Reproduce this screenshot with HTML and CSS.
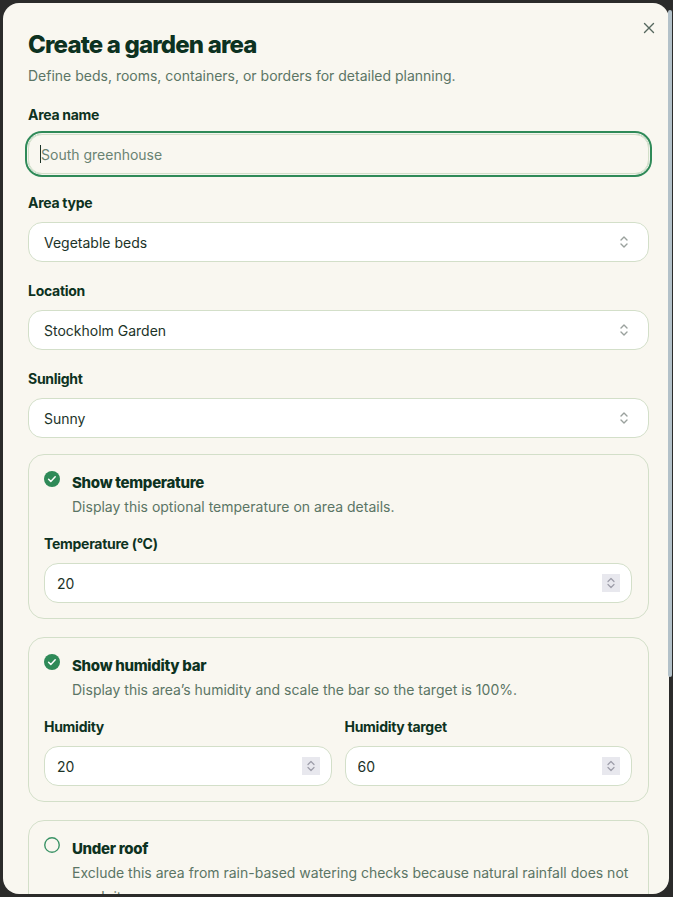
FILE: index.html
```html
<!DOCTYPE html>
<html lang="en">
<head>
    <meta charset="UTF-8">
    <meta name="viewport" content="width=device-width, initial-scale=1.0">
    <title>Create a garden area</title>
    <link rel="stylesheet" href="styles.css">
</head>
<body>
    <div class="backdrop">
        <div class="modal">
            <button class="close" aria-label="Close">
                <svg width="12" height="12" viewBox="0 0 12 12"><path d="M1.5 1.5l9 9M10.5 1.5l-9 9" stroke="#56685f" stroke-width="1.4" stroke-linecap="round"/></svg>
            </button>

            <div class="modal-body">
                <h1 class="title">Create a garden area</h1>
                <p class="subtitle">Define beds, rooms, containers, or borders for detailed planning.</p>

                <div class="form">
                    <div class="field">
                        <label class="label">Area name</label>
                        <div class="text-input is-focused">
                            <span class="caret"></span>
                            <input type="text" placeholder="South greenhouse">
                        </div>
                    </div>

                    <div class="field">
                        <label class="label">Area type</label>
                        <button class="select">
                            <span>Vegetable beds</span>
                            <svg class="chevrons" width="10" height="14" viewBox="0 0 10 14"><path d="M2 5l3-3 3 3M2 9l3 3 3-3" fill="none" stroke="#9aa19d" stroke-width="1.4" stroke-linecap="round" stroke-linejoin="round"/></svg>
                        </button>
                    </div>

                    <div class="field">
                        <label class="label">Location</label>
                        <button class="select">
                            <span>Stockholm Garden</span>
                            <svg class="chevrons" width="10" height="14" viewBox="0 0 10 14"><path d="M2 5l3-3 3 3M2 9l3 3 3-3" fill="none" stroke="#9aa19d" stroke-width="1.4" stroke-linecap="round" stroke-linejoin="round"/></svg>
                        </button>
                    </div>

                    <div class="field">
                        <label class="label">Sunlight</label>
                        <button class="select">
                            <span>Sunny</span>
                            <svg class="chevrons" width="10" height="14" viewBox="0 0 10 14"><path d="M2 5l3-3 3 3M2 9l3 3 3-3" fill="none" stroke="#9aa19d" stroke-width="1.4" stroke-linecap="round" stroke-linejoin="round"/></svg>
                        </button>
                    </div>

                    <!-- optional blocks -->
                    <div class="option-card first">
                        <div class="option-head">
                            <svg class="check" width="16" height="16" viewBox="0 0 16 16"><circle cx="8" cy="8" r="8" fill="#2f8a58"/><path d="M4.6 8.2l2.2 2.2 4.4-4.6" fill="none" stroke="#fff" stroke-width="1.5" stroke-linecap="round" stroke-linejoin="round"/></svg>
                            <div>
                                <div class="option-title">Show temperature</div>
                                <div class="option-desc">Display this optional temperature on area details.</div>
                            </div>
                        </div>
                        <div class="field">
                            <label class="label">Temperature (°C)</label>
                            <div class="number-input">
                                <input type="text" value="20">
                                <span class="spinner"><svg width="10" height="14" viewBox="0 0 10 14"><path d="M2 5.5l3-3 3 3M2 8.5l3 3 3-3" fill="none" stroke="#9c9ca8" stroke-width="1.2" stroke-linecap="round" stroke-linejoin="round"/></svg></span>
                            </div>
                        </div>
                    </div>

                    <div class="option-card">
                        <div class="option-head">
                            <svg class="check" width="16" height="16" viewBox="0 0 16 16"><circle cx="8" cy="8" r="8" fill="#2f8a58"/><path d="M4.6 8.2l2.2 2.2 4.4-4.6" fill="none" stroke="#fff" stroke-width="1.5" stroke-linecap="round" stroke-linejoin="round"/></svg>
                            <div>
                                <div class="option-title">Show humidity bar</div>
                                <div class="option-desc">Display this area’s humidity and scale the bar so the target is 100%.</div>
                            </div>
                        </div>
                        <div class="two-cols">
                            <div class="field">
                                <label class="label">Humidity</label>
                                <div class="number-input">
                                    <input type="text" value="20">
                                    <span class="spinner"><svg width="10" height="14" viewBox="0 0 10 14"><path d="M2 5.5l3-3 3 3M2 8.5l3 3 3-3" fill="none" stroke="#9c9ca8" stroke-width="1.2" stroke-linecap="round" stroke-linejoin="round"/></svg></span>
                                </div>
                            </div>
                            <div class="field">
                                <label class="label">Humidity target</label>
                                <div class="number-input">
                                    <input type="text" value="60">
                                    <span class="spinner"><svg width="10" height="14" viewBox="0 0 10 14"><path d="M2 5.5l3-3 3 3M2 8.5l3 3 3-3" fill="none" stroke="#9c9ca8" stroke-width="1.2" stroke-linecap="round" stroke-linejoin="round"/></svg></span>
                                </div>
                            </div>
                        </div>
                    </div>

                    <div class="option-card">
                        <div class="option-head">
                            <svg class="check" width="16" height="16" viewBox="0 0 16 16"><circle cx="8" cy="8" r="7.25" fill="none" stroke="#3b9366" stroke-width="1.4"/></svg>
                            <div>
                                <div class="option-title">Under roof</div>
                                <div class="option-desc">Exclude this area from rain-based watering checks because natural rainfall does not reach it.</div>
                            </div>
                        </div>
                    </div>
                </div>
            </div>
        </div>
        <div class="scroll-thumb"></div>
    </div>
</body>
</html>
```

FILE: styles.css
```css
* { box-sizing: border-box; }

html, body { margin: 0; height: 100%; overflow: hidden; }

body {
    background: #2b2b2a;
    font-family: Inter, "Noto Sans", sans-serif;
    color: #0e3323;
}

.backdrop { height: 100%; padding: 3px 4px 3px 3px; }

.modal {
    position: relative;
    height: 100%;
    background: #f9f7f0;
    border-radius: 16px;
    overflow: hidden;
}

.close {
    position: absolute;
    top: 15px;
    right: 10px;
    width: 20px;
    height: 20px;
    padding: 4px;
    border: 0;
    background: none;
}

.modal-body { padding: 26px 20px 0 25px; }

.title {
    margin: 0;
    font-size: 24px;
    line-height: 32px;
    font-weight: 800;
    letter-spacing: -0.035em;
    color: #0d3221;
}

.subtitle {
    margin: 5px 0 0;
    font-size: 14px;
    line-height: 20px;
    color: #5b7565;
}

.form {
    display: flex;
    flex-direction: column;
    gap: 19px;
    margin-top: 19px;
}

.field { display: flex; flex-direction: column; }

.label {
    font-size: 14px;
    line-height: 20px;
    font-weight: 700;
    letter-spacing: -0.02em;
    color: #0d3221;
    margin-bottom: 9px;
}

.text-input {
    position: relative;
    height: 40px;
    border: 1px solid #d3dfc9;
    border-radius: 14px;
    display: flex;
    align-items: center;
    padding: 0 11px;
}

.text-input.is-focused { box-shadow: 0 0 0 1px #f3f5ee, 0 0 0 3px #2f8a58; }

.text-input input {
    flex: 1;
    border: 0;
    background: none;
    outline: none;
    font: inherit;
    font-size: 14px;
    color: #1c3328;
    padding: 0 0 0 1px;
}

.text-input input::placeholder { color: #6a8373; }

.caret {
    position: absolute;
    left: 11px;
    top: 10px;
    width: 1px;
    height: 18px;
    background: #1c3328;
}

.select {
    height: 40px;
    border: 1px solid #d3dfc9;
    border-radius: 14px;
    background: #fff;
    display: flex;
    align-items: center;
    justify-content: space-between;
    padding: 0 19px 0 15px;
    font: inherit;
    font-size: 14px;
    color: #1c3328;
    text-align: left;
}

.option-card {
    border: 1px solid #d3dfc9;
    border-radius: 16px;
    padding: 16px 16px 15px 15px;
    display: flex;
    flex-direction: column;
    gap: 15px;
}

.option-card.first { margin-top: -3px; }

.option-card + .option-card { margin-top: -1px; }

.option-head { display: flex; gap: 12px; align-items: flex-start; }

.check { flex: none; }

.option-title {
    font-size: 15px;
    line-height: 24px;
    font-weight: 800;
    letter-spacing: -0.02em;
    color: #0d3221;
}

.option-desc {
    font-size: 14px;
    line-height: 24px;
    color: #5b7565;
}

.number-input {
    height: 40px;
    border: 1px solid #d3dfc9;
    border-radius: 14px;
    background: #fff;
    display: flex;
    align-items: center;
    padding: 0 11px 0 12px;
}

.number-input input {
    flex: 1;
    min-width: 0;
    border: 0;
    outline: none;
    background: none;
    font: inherit;
    font-size: 14px;
    color: #1c3328;
    padding: 0;
}

.spinner {
    width: 18px;
    height: 18px;
    background: #e8e8ee;
    display: flex;
    align-items: center;
    justify-content: center;
}

.two-cols {
    display: grid;
    grid-template-columns: 1fr 1fr;
    gap: 13px;
}

.scroll-thumb {
    position: absolute;
    top: 10px;
    right: 1px;
    width: 4px;
    height: 667px;
    border-radius: 2px;
    background: #b3c1c9;
}
```
